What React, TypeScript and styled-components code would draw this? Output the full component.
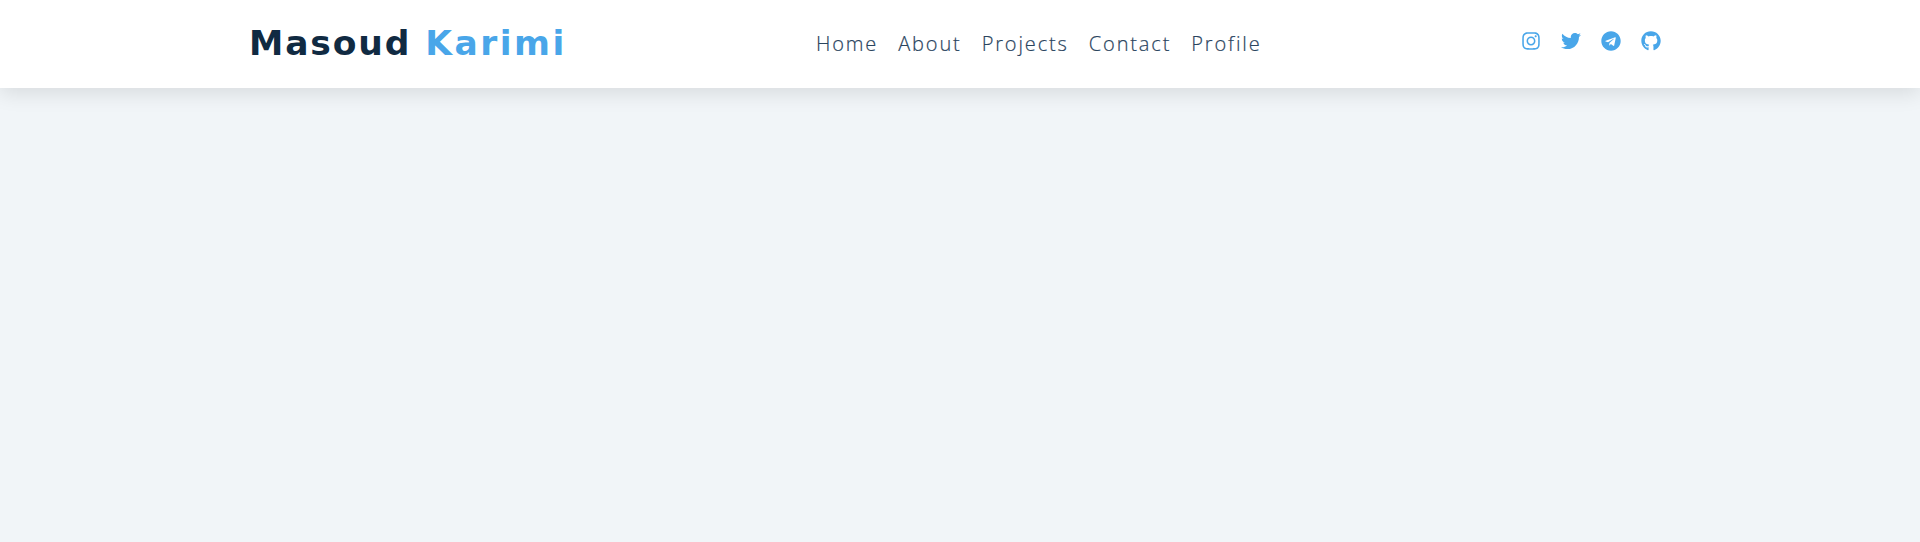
import React from 'react';
import styled, { createGlobalStyle } from 'styled-components';
import { FaInstagram, FaTwitter, FaTelegram, FaGithub } from 'react-icons/fa';

const GlobalStyle = createGlobalStyle`
  * { box-sizing: border-box; }
  body { margin: 0; min-height: 100vh; background: #f1f5f8; overflow: hidden; }
`;
const Navbar = styled.header`
  height: 88px;
  background: #fff;
  box-shadow: 0 5px 20px rgba(0, 0, 0, 0.11);
  padding: 0 259px 0 249px;
  display: grid;
  grid-template-columns: 567px 1fr auto;
`;
const Logo = styled.h2`
  margin: 0;
  font: bold 34.5px/86px 'DejaVu Sans', sans-serif;
  letter-spacing: 1.87px;
  color: #102a42;
  white-space: nowrap;
`;
const Accent = styled.span`
  color: #49a6e9;
  letter-spacing: 2.5px;
`;
const Links = styled.nav`
  display: flex;
  gap: 20px;
`;
const NavLink = styled.a`
  font: 300 20px/88px 'Open Sans', sans-serif;
  letter-spacing: 1.86px;
  color: #2a445e;
  -webkit-text-stroke: 0.2px #2a445e;
`;
const Social = styled.div`
  display: flex;
  gap: 20px;
  padding-top: 31px;
  color: #49a6e9;
  font-size: 20px;
`;

const links = ['Home', 'About', 'Projects', 'Contact', 'Profile'];

export default function App() {
  return (
    <>
      <GlobalStyle />
      <Navbar>
        <Logo>Masoud <Accent>Karimi</Accent></Logo>
        <Links>{links.map((l) => <NavLink key={l}>{l}</NavLink>)}</Links>
        <Social><FaInstagram /><FaTwitter /><FaTelegram /><FaGithub /></Social>
      </Navbar>
    </>
  );
}
